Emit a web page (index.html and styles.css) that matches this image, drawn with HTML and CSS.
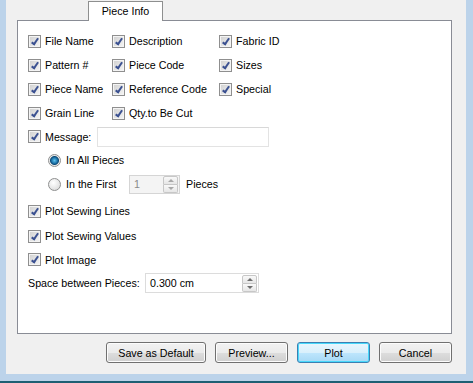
FILE: index.html
```html
<!DOCTYPE html>
<html lang="en">
<head>
    <meta charset="UTF-8">
    <title>Plot - Piece Info</title>
    <link rel="stylesheet" href="styles.css">
</head>
<body>
    <div class="frame">
        <div class="window">
            <div class="tabs">
                <div class="tab">Piece Info</div>
            </div>

            <div class="panel">
                <div class="grid">
                    <label class="item"><span class="cb"></span>File Name</label>
                    <label class="item"><span class="cb"></span>Description</label>
                    <label class="item"><span class="cb"></span>Fabric ID</label>
                    <label class="item"><span class="cb"></span>Pattern #</label>
                    <label class="item"><span class="cb"></span>Piece Code</label>
                    <label class="item"><span class="cb"></span>Sizes</label>
                    <label class="item"><span class="cb"></span>Piece Name</label>
                    <label class="item"><span class="cb"></span>Reference Code</label>
                    <label class="item"><span class="cb"></span>Special</label>
                    <label class="item"><span class="cb"></span>Grain Line</label>
                    <label class="item"><span class="cb"></span>Qty.to Be Cut</label>
                </div>

                <div class="row row-msg">
                    <label class="item"><span class="cb"></span><span class="msg-label">Message:</span></label>
                    <div class="field msg"></div>
                </div>

                <div class="row sub">
                    <label class="item"><span class="radio on"></span>In All Pieces</label>
                </div>
                <div class="row sub">
                    <label class="item"><span class="radio"></span><span class="first-label">In the First</span></label>
                    <div class="field spin disabled">
                        <span class="value">1</span>
                        <span class="arrows"><span class="up"></span><span class="down"></span></span>
                    </div>
                    <span class="after">Pieces</span>
                </div>

                <div class="row row-lines">
                    <label class="item"><span class="cb"></span>Plot Sewing Lines</label>
                </div>
                <div class="row">
                    <label class="item"><span class="cb"></span>Plot Sewing Values</label>
                </div>
                <div class="row row-image">
                    <label class="item"><span class="cb"></span>Plot Image</label>
                </div>
                <div class="row">
                    <span class="space-label">Space between Pieces:</span>
                    <div class="field spin space">
                        <span class="value">0.300 cm</span>
                        <span class="arrows"><span class="up"></span><span class="down"></span></span>
                    </div>
                </div>
            </div>

            <div class="buttons">
                <button class="wide">Save as Default</button>
                <button>Preview...</button>
                <button class="default">Plot</button>
                <button>Cancel</button>
            </div>
        </div>
    </div>
</body>
</html>
```

FILE: styles.css
```css
body {
    margin: 0;
    font-family: 'Liberation Sans', Arial, sans-serif;
    font-size: 10.7px;
    color: #000;
    background-color: #f0f0f0;
}
.frame {
    width: 473px;
    height: 383px;
    box-sizing: border-box;
    border-bottom: 2px solid #1f5f73;
}
.window {
    height: 381px;
    box-sizing: border-box;
    border-left: 6px solid #bcd3ea;
    border-right: 7px solid #bcd3ea;
    border-bottom: 7px solid #bcd3ea;
    background-color: #f0f0f0;
    padding: 0 14px 0 11px;
}
.tabs {
    height: 20px;
    display: flex;
    align-items: flex-end;
}
.tab {
    position: relative;
    z-index: 1;
    margin-left: 71px;
    margin-bottom: -1px;
    width: 75px;
    height: 20px;
    box-sizing: border-box;
    border: 1px solid #8e8f8f;
    border-bottom: none;
    background-color: #fff;
    text-align: center;
    line-height: 19px;
}
.panel {
    height: 314px;
    box-sizing: border-box;
    border: 1px solid #898c95;
    background-color: #fff;
    padding: 8px 0 0 10px;
}
.grid {
    display: grid;
    grid-template-columns: 84px 107px 1fr;
    grid-auto-rows: 24px;
}
.item {
    display: flex;
    align-items: center;
    gap: 4px;
    white-space: nowrap;
}
.row {
    display: flex;
    align-items: center;
    height: 24px;
}
.row-msg {
    height: 23px;
}
.sub {
    padding-left: 20px;
}
.sub .item {
    gap: 5px;
}
.row-lines {
    margin-top: 2px;
    height: 26px;
}
.row-image {
    height: 23px;
}
.cb {
    position: relative;
    width: 13px;
    height: 13px;
    box-sizing: border-box;
    border: 1px solid #8f8f8f;
    background: linear-gradient(135deg, #cfcfcf, #f6f6f6);
    box-shadow: inset 0 0 0 1px #f4f4f4;
    flex: none;
}
.cb::after {
    content: "";
    position: absolute;
    left: 4px;
    top: 1px;
    width: 2px;
    height: 6px;
    border-right: 2px solid #3b5191;
    border-bottom: 2px solid #3b5191;
    transform: rotate(35deg);
}
.radio {
    width: 13px;
    height: 13px;
    box-sizing: border-box;
    border-radius: 50%;
    border: 1px solid #8e8f8f;
    background: radial-gradient(circle at 40% 35%, #fff, #d4d4d4);
    flex: none;
}
.radio.on {
    background: radial-gradient(circle, #5ec3ee 0, #1a6fa5 3px, #0d4a75 4px, #e8e8e8 5px, #f7f7f7 6px);
}
.msg-label {
    width: 52px;
}
.field {
    box-sizing: border-box;
    border: 1px solid #abadb3;
    border-top-color: #e3e9ef;
    background-color: #fff;
}
.msg {
    width: 172px;
    height: 20px;
    border-color: #e3e3e3;
    border-top-color: #d8d8d8;
}
.first-label {
    width: 63px;
}
.spin {
    display: flex;
    align-items: center;
    height: 19px;
    padding-left: 4px;
    border: 1px solid #d5d5d5;
}
.spin .value {
    flex: 1;
}
.spin.disabled {
    width: 51px;
    background-color: #f4f4f4;
    color: #8a8a8a;
}
.space {
    width: 114px;
    height: 20px;
    border-color: #dcdcdc;
}
.arrows {
    display: flex;
    flex-direction: column;
    width: 15px;
    height: 17px;
    margin-right: 1px;
}
.arrows span {
    flex: 1;
    display: flex;
    align-items: center;
    justify-content: center;
    border: 1px solid #c7c7c7;
    background: linear-gradient(#f9f9f9, #e6e6e6);
}
.arrows .up {
    border-radius: 2px 2px 0 0;
}
.arrows .down {
    border-radius: 0 0 2px 2px;
    border-top: none;
}
.arrows .up::before {
    content: "";
    border: 3px solid transparent;
    border-top: none;
    border-bottom: 3px solid #6d6d6d;
}
.arrows .down::before {
    content: "";
    border: 3px solid transparent;
    border-bottom: none;
    border-top: 3px solid #6d6d6d;
}
.disabled .arrows .up::before {
    border-bottom-color: #a8a8a8;
}
.disabled .arrows .down::before {
    border-top-color: #a8a8a8;
}
.after {
    margin-left: 6px;
}
.space-label {
    width: 117px;
    white-space: nowrap;
}
.buttons {
    display: flex;
    justify-content: flex-end;
    gap: 9px;
    margin-top: 8px;
}
button {
    width: 73px;
    height: 21px;
    box-sizing: border-box;
    font-family: inherit;
    font-size: 10.7px;
    color: #000;
    border: 1px solid #707070;
    border-radius: 3px;
    background: linear-gradient(#f2f2f2 0, #ebebeb 50%, #dddddd 51%, #cfcfcf 100%);
    box-shadow: inset 0 0 0 1px #fcfcfc;
    padding: 0;
}
button.wide {
    width: 100px;
}
button.default {
    border-color: #3c7fb1;
    box-shadow: inset 0 0 0 1px #48d8fb;
    background: linear-gradient(#eaf6fd 0, #d9f0fc 50%, #bee6fd 51%, #a7d9f5 100%);
}
```
